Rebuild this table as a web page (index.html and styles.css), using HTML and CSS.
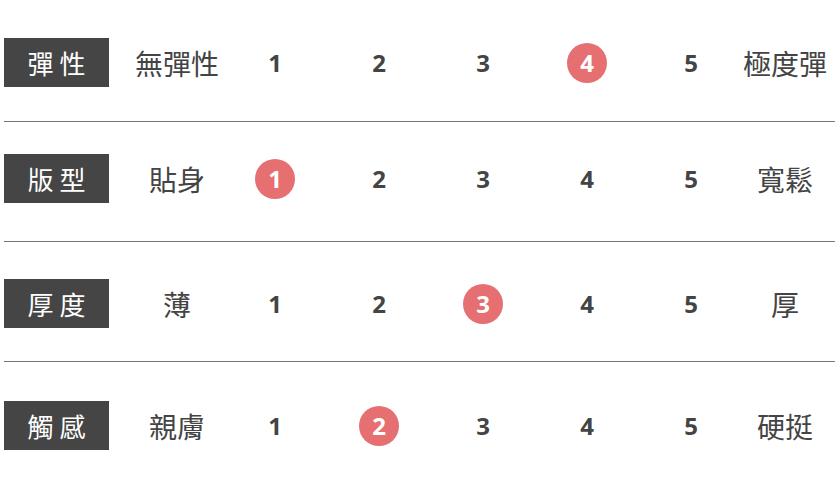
FILE: index.html
```html
<!DOCTYPE html>
<html lang="zh-Hant">
<head>
<meta charset="utf-8">
<title>商品特性</title>
<link rel="stylesheet" href="styles.css">
</head>
<body>
<div class="chart">
  <div class="row">
    <div class="label">彈性</div>
    <div class="word">無彈性</div>
    <div class="num">1</div>
    <div class="num">2</div>
    <div class="num">3</div>
    <div class="num"><span class="dot">4</span></div>
    <div class="num">5</div>
    <div class="word end">極度彈</div>
  </div>
  <div class="row">
    <div class="label">版型</div>
    <div class="word">貼身</div>
    <div class="num"><span class="dot">1</span></div>
    <div class="num">2</div>
    <div class="num">3</div>
    <div class="num">4</div>
    <div class="num">5</div>
    <div class="word end">寬鬆</div>
  </div>
  <div class="row">
    <div class="label">厚度</div>
    <div class="word">薄</div>
    <div class="num">1</div>
    <div class="num">2</div>
    <div class="num"><span class="dot">3</span></div>
    <div class="num">4</div>
    <div class="num">5</div>
    <div class="word end">厚</div>
  </div>
  <div class="row last">
    <div class="label">觸感</div>
    <div class="word">親膚</div>
    <div class="num">1</div>
    <div class="num"><span class="dot">2</span></div>
    <div class="num">3</div>
    <div class="num">4</div>
    <div class="num">5</div>
    <div class="word end">硬挺</div>
  </div>
</div>
</body>
</html>
```

FILE: styles.css
```css
* { box-sizing: border-box; }
html, body { margin: 0; padding: 0; background: #ffffff; }
body {
  font-family: "Noto Sans CJK TC", "Noto Sans", sans-serif;
  color: #444444;
}
.chart {
  width: 831px;
  margin: 2px 0 0 4px;
}
.row {
  display: flex;
  align-items: center;
  padding: 36px 0 34px;
  border-bottom: 1px solid #777777;
}
.row:nth-child(2) { padding-top: 32px; padding-bottom: 38px; }
.row:nth-child(3) { padding-top: 37px; padding-bottom: 33px; }
.row.last { border-bottom: none; padding-top: 39px; }
.label {
  width: 105px;
  height: 49px;
  margin-right: 22px;
  background: #454545;
  color: #ffffff;
  font-size: 26px;
  font-weight: 400;
  letter-spacing: 6px;
  padding-left: 6px;
  display: flex;
  align-items: center;
  justify-content: center;
  line-height: 1;
}
.word {
  width: 92px;
  text-align: center;
  font-size: 28px;
  line-height: 1;
  color: #444444;
}
.word.end { width: 84px; }
.num {
  width: 104px;
  display: flex;
  justify-content: center;
  align-items: center;
  font-family: "Open Sans", "Liberation Sans", sans-serif;
  font-weight: 700;
  font-size: 24px;
  line-height: 1;
  color: #444444;
}
.dot {
  width: 40px;
  height: 40px;
  border-radius: 50%;
  background: #e66f71;
  color: #ffffff;
  display: flex;
  align-items: center;
  justify-content: center;
  font-weight: 700;
  font-size: 24px;
}
```
